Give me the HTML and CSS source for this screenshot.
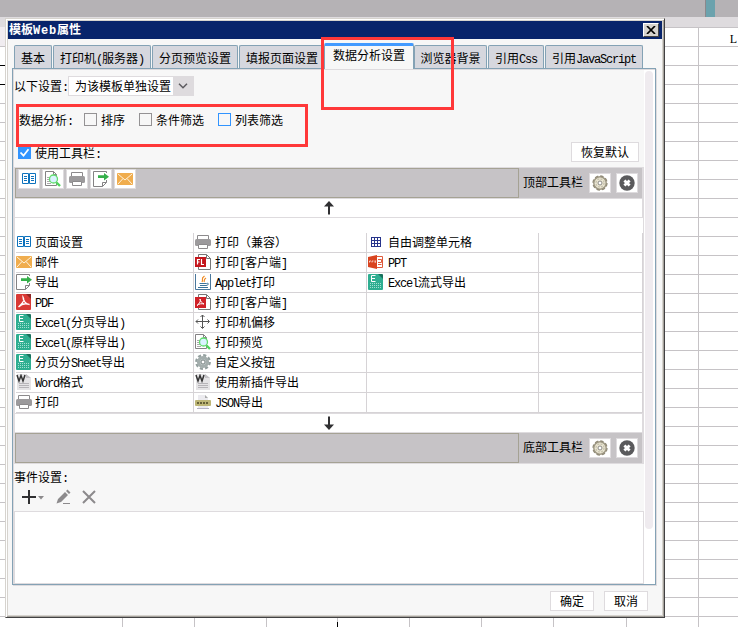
FILE: index.html
```html
<!DOCTYPE html>
<html lang="zh-CN">
<head>
<meta charset="utf-8">
<title>模板Web属性</title>
<link rel="stylesheet" href="styles.css">
</head>
<body>
<svg class="defs" aria-hidden="true">
  <symbol id="page" viewBox="0 0 16 16"><path d="M1.500 2.500h6v10h-6zM8.500 2.500h6v10h-6z" fill="#fff" stroke="#0d72bd"/><path d="M3 5.500h3M3 7.500h3M3 9.500h3M10 5.500h3M10 7.500h3M10 9.500h3" stroke="#0d72bd"/></symbol>
  <symbol id="mail" viewBox="0 0 16 16"><rect y="2" width="16" height="12" rx="1" fill="#f0ad4e"/><path d="M1 3l7 6 7-6M1 13l5-5.500M15 13l-5-5.500" fill="none" stroke="#fff3dd"/></symbol>
  <symbol id="export" viewBox="0 0 16 16"><path d="M13.500 2V.500H.500v15h9l4-4V9M9.500 15.500v-4h4" fill="#fff" stroke="#848284"/><path d="M5 4.200h6V2l5 3.700-5 3.700V7H5z" fill="#35b04a"/></symbol>
  <symbol id="pdf" viewBox="0 0 16 16"><path d="M1 0h10l4 4v11a1 1 0 0 1-1 1H1a1 1 0 0 1-1-1V1a1 1 0 0 1 1-1z" fill="#d93a36"/><path d="M10 0l5 5V0z" fill="#8f2725"/><path d="M7 3c2 3 .500 5-4.500 10 3-3 7-4 11-2.500C10 10 7 7 7 3z" fill="none" stroke="#fff" stroke-width="1.300"/></symbol>
  <symbol id="excel" viewBox="0 0 16 16"><path d="M1 0h10l4 4v11a1 1 0 0 1-1 1H1a1 1 0 0 1-1-1V1a1 1 0 0 1 1-1z" fill="#2fae91"/><path d="M10 0l5 5V1a1 1 0 0 0-1-1z" fill="#18715d"/><path d="M7.500 1.500H3.500v6h4M3.500 4.500h3.500" fill="none" stroke="#fff"/><path d="M2 9.500h11M2 11.500h11M2 13.500h11" stroke="#a3e0d2" stroke-dasharray="1 1"/></symbol>
  <symbol id="word" viewBox="0 0 16 16"><path d="M1 0h9l5 4v12H1z" fill="#e5e4e6"/><path d="M10 0v4h5z" fill="#c4c2c6"/><path d="M1 1l2 6 2-5.500L7 7l2-6" fill="none" stroke="#333" stroke-width="1.500"/><path d="M3 9.500h10M3 11.500h10M3 13.500h10" stroke="#b6b4b8"/></symbol>
  <symbol id="print" viewBox="0 0 16 16"><path d="M2.500 6V1.500h11V6" fill="#fff" stroke="#8c8a8c"/><rect y="5" width="16" height="7" rx="1.500" fill="#9c9a9c"/><path d="M3.500 10.500h9v4h-9z" fill="#fff" stroke="#8c8a8c"/></symbol>
  <symbol id="flash" viewBox="0 0 16 16"><path d="M3.500 15.500V.500h8l4 4v11zM11.500.500v4h4" fill="#fff" stroke="#777"/><rect y="3" width="11" height="10" fill="#c4161c"/><path d="M5 5.500H2.500v5M2.500 8h2M6.500 5v5.500h2.500" fill="none" stroke="#fff" stroke-width="1.200"/></symbol>
  <symbol id="pdfc" viewBox="0 0 16 16"><path d="M3.500 15.500V.500h8l4 4v11zM11.500.500v4h4" fill="#fff" stroke="#777"/><rect y="3" width="11" height="11" fill="#cf2027"/><path d="M5 5c1 2 0 4-3 6.500 2-2 5-2 7-1.500C7 9 5 7 5 5z" fill="none" stroke="#fff"/></symbol>
  <symbol id="java" viewBox="0 0 16 16"><path d="M.500 0v15.500h15V0" fill="#fff" stroke="#49779c"/><path d="M9.500 2C5 5 9 5 7 8M11 4c-3 2-1 2-2 4" fill="none" stroke="#ee8a25" stroke-width="1.200"/><path d="M4.500 9.500h7c3-1 2 2-.500 2M5 11.500h6M3 13.500h10" fill="none" stroke="#3b7299"/></symbol>
  <symbol id="move" viewBox="0 0 16 16"><path d="M7.500 1v13M1 7.500h13M5.500 3l2-2 2 2M5.500 12.500l2 2 2-2M3 5.500l-2 2 2 2M12.500 5.500l2 2-2 2" fill="none" stroke="#555"/></symbol>
  <symbol id="preview" viewBox="0 0 16 16"><path d="M.500 14.500V.500h8l3 3v11zM8.500.500v3h3" fill="#fff" stroke="#848284"/><path d="M2 6.500h3M2 8.500h3M2 10.500h3M2 12.500h4" stroke="#aaa"/><path d="M11.500 11.500L15 15" stroke="#4fd45c" stroke-width="2.400"/><circle cx="8.500" cy="8" r="4" fill="#d9f3ff" stroke="#61dc6d" stroke-width="1.300"/></symbol>
  <symbol id="gear" viewBox="0 0 16 16"><circle cx="8" cy="8" r="6.700" fill="none" stroke="#94a09f" stroke-width="2.400" stroke-dasharray="3.100 2.160"/><circle cx="8" cy="8" r="4.600" fill="#b9c3c2" stroke="#a3adac" stroke-width="3"/><circle cx="8" cy="8" r="2" fill="#fff" stroke="#7d8887"/></symbol>
  <symbol id="json" viewBox="0 0 16 16"><path d="M3 1h7l3 3v11H3z" fill="#ecebef"/><path d="M10 1v3h3z" fill="#aaa"/><rect y="6" width="16" height="6" rx="1" fill="#bdb676"/><path d="M2 9h12" stroke="#656038" stroke-width="2" stroke-dasharray="2 1"/><path d="M2 14.500h12" stroke="#b5b4c5"/></symbol>
  <symbol id="grid" viewBox="0 0 16 16"><path d="M3.500 3v10M6.500 3v10M9.500 3v10M12.500 3v10M3 3.500h10M3 6.500h10M3 9.500h10M3 12.500h10" stroke="#27348b"/></symbol>
  <symbol id="ppt" viewBox="0 0 16 16"><path d="M8.500 2.500h6v11h-6" fill="#fff" stroke="#df5b3c"/><path d="M10 5.500h3.500v3H10M10 10.500h3.500" fill="none" stroke="#df5b3c"/><path d="M0 3l9-2v14l-9-2z" fill="#d9441f"/><path d="M1.500 8.500V7H3M4 8.500V7h1.500M6.500 7H8M7.200 7v2" fill="none" stroke="#fff" stroke-width=".7"/></symbol>
  <symbol id="cog" viewBox="0 0 16 16"><circle cx="8" cy="8" r="6.200" fill="#ece8d4" stroke="#a19b87" stroke-width="1.500"/><circle cx="8" cy="8" r="7" fill="none" stroke="#918b78" stroke-width="1.300" stroke-dasharray="3.500 2"/><circle cx="8" cy="8" r="4" fill="none" stroke="#c9c4b0" stroke-width="1.500" stroke-dasharray="2 1.140"/><circle cx="8" cy="8" r="2" fill="#fff" stroke="#8b8a85"/></symbol>
  <symbol id="close" viewBox="0 0 16 16"><circle cx="8" cy="8" r="7.700" fill="#5a5a5c"/><path d="M5.400 5.400l5.200 5.200M10.600 5.400l-5.200 5.200" stroke="#fff" stroke-width="2.800"/></symbol>
</svg>

<div class="sheet">
  <div class="ribbon"><i class="marker"></i></div>
  <div class="strip"></div>
  <div class="cells"><span class="cell-text">L</span></div>
  <i class="dark-row first"></i><i class="dark-row second"></i><i class="gutter"></i><i class="dark-col"></i>
</div>

<div class="dialog">
  <div class="title"><span>模板<b class="en">Web</b>属性</span>
    <span class="x-btn"><svg width="10" height="8" viewBox="0 0 10 8"><path d="M1 0l8 8M9 0L1 8" stroke="#000" stroke-width="1.700"/></svg></span>
  </div>
  <div class="tabs">
    <div class="tab t1">基本</div><div class="tab t2">打印机<span class="en">(</span>服务器<span class="en">)</span></div><div class="tab t3">分页预览设置</div><div class="tab t4">填报页面设置</div><div class="tab active">数据分析设置</div><div class="tab t6">浏览器背景</div><div class="tab t7">引用<span class="en">Css</span></div><div class="tab t8">引用<span class="en">JavaScript</span></div>
  </div>
  <div class="panel">
    <div class="main">
      <div class="scope"><span>以下设置<span class="en">:</span></span>
        <div class="select"><span>为该模板单独设置</span><i><svg width="10" height="6" viewBox="0 0 10 6"><path d="M1 .800l4 4 4-4" fill="none" stroke="#5c5a5f" stroke-width="1.500"/></svg></i></div>
      </div>
      <div class="analysis"><span class="lead">数据分析<span class="en">:</span></span>
        <label class="c1"><i class="box"></i>排序</label><label class="c2"><i class="box"></i>条件筛选</label><label><i class="box focus"></i>列表筛选</label>
      </div>
      <div class="use"><label><i class="box on"><svg width="13" height="13" viewBox="0 0 13 13"><path d="M2.500 6.500l3 3.200 5-6.500" fill="none" stroke="#fff" stroke-width="1.800"/></svg></i><span>使用工具栏<span class="en">:</span></span></label><span class="btn reset">恢复默认</span></div>

      <div class="bar">
        <div class="slots"><span class="tool"><svg><use href="#page"/></svg></span><span class="tool"><svg><use href="#preview"/></svg></span><span class="tool"><svg><use href="#print"/></svg></span><span class="tool"><svg><use href="#export"/></svg></span><span class="tool"><svg><use href="#mail"/></svg></span></div>
        <span class="bar-name">顶部工具栏</span><span class="tool"><svg><use href="#cog"/></svg></span><span class="tool"><svg><use href="#close"/></svg></span>
      </div>
      <div class="arrow"><svg width="12" height="14" viewBox="0 0 12 14"><path d="M6 13.500V3" stroke="#303032" stroke-width="2"/><path d="M6 0l5 5.500H1z" fill="#303032"/></svg></div>
      <div class="grid">
        <div><svg><use href="#page"/></svg><p>页面设置</p></div><div><svg><use href="#print"/></svg><p>打印（兼容）</p></div><div><svg><use href="#grid"/></svg><p>自由调整单元格</p></div><div></div>
        <div><svg><use href="#mail"/></svg><p>邮件</p></div><div><svg><use href="#flash"/></svg><p>打印<span class="en">[</span>客户端<span class="en">]</span></p></div><div><svg><use href="#ppt"/></svg><p><span class="en">PPT</span></p></div><div></div>
        <div><svg><use href="#export"/></svg><p>导出</p></div><div><svg><use href="#java"/></svg><p><span class="en">Applet</span>打印</p></div><div><svg><use href="#excel"/></svg><p><span class="en">Excel</span>流式导出</p></div><div></div>
        <div><svg><use href="#pdf"/></svg><p><span class="en">PDF</span></p></div><div><svg><use href="#pdfc"/></svg><p>打印<span class="en">[</span>客户端<span class="en">]</span></p></div><div></div><div></div>
        <div><svg><use href="#excel"/></svg><p><span class="en">Excel(</span>分页导出<span class="en">)</span></p></div><div><svg><use href="#move"/></svg><p>打印机偏移</p></div><div></div><div></div>
        <div><svg><use href="#excel"/></svg><p><span class="en">Excel(</span>原样导出<span class="en">)</span></p></div><div><svg><use href="#preview"/></svg><p>打印预览</p></div><div></div><div></div>
        <div><svg><use href="#excel"/></svg><p>分页分<span class="en">Sheet</span>导出</p></div><div><svg><use href="#gear"/></svg><p>自定义按钮</p></div><div></div><div></div>
        <div><svg><use href="#word"/></svg><p><span class="en">Word</span>格式</p></div><div><svg><use href="#word"/></svg><p>使用新插件导出</p></div><div></div><div></div>
        <div><svg><use href="#print"/></svg><p>打印</p></div><div><svg><use href="#json"/></svg><p><span class="en">JSON</span>导出</p></div><div></div><div></div>
      </div>
      <div class="arrow down"><svg width="12" height="14" viewBox="0 0 12 14"><path d="M6 .500V11" stroke="#303032" stroke-width="2"/><path d="M6 14l5-5.500H1z" fill="#303032"/></svg></div>
      <div class="bar">
        <div class="slots"></div>
        <span class="bar-name">底部工具栏</span><span class="tool"><svg><use href="#cog"/></svg></span><span class="tool"><svg><use href="#close"/></svg></span>
      </div>
      <div class="event-name">事件设置<span class="en">:</span></div>
      <div class="event-tools">
        <svg width="24" height="16" viewBox="0 0 24 16"><path d="M0 8h14M7 1v14" stroke="#303032" stroke-width="2"/><path d="M16 7h6l-3 3.500z" fill="#8c8a8c"/></svg>
        <svg class="pencil" width="14" height="16" viewBox="0 0 14 16"><path d="M.500 14.500L2 10l7-7 3 3-7 7zM10 2l1.500-1.500 3 3L13 5z" fill="#8c8a8c"/><path d="M7 14.500h7" stroke="#8c8a8c"/></svg>
        <svg width="14" height="16" viewBox="0 0 14 16"><path d="M1 2l12 12M13 2L1 14" stroke="#8c8a8c" stroke-width="2"/></svg>
      </div>
      <div class="events"></div>
    </div>
    <div class="track"><div class="thumb"></div></div>
  </div>
  <div class="footer"><span class="btn">确定</span><span class="btn">取消</span></div>
</div>
<div class="mark mark-tab"></div>
<div class="mark mark-analysis"></div>
</body>
</html>
```
FILE: styles.css
```css
* { box-sizing: border-box; }
body {
  margin: 0;
  width: 738px;
  height: 627px;
  overflow: hidden;
  position: relative;
  background: #fff;
  color: #000;
  font: 12px/16px "Noto Sans CJK SC", sans-serif;
  white-space: nowrap;
}
.defs { position: absolute; width: 0; height: 0; }
i { font-style: normal; display: block; }
p { margin: 0; }
.en { font-family: "Liberation Mono", "Noto Sans CJK SC", monospace; letter-spacing: -1.2px; }

/* spreadsheet behind the window */
.sheet { height: 627px; position: relative; display: flex; flex-direction: column; }
.ribbon { height: 17px; background: #b5b2b5; display: flex; justify-content: flex-end; padding-right: 23px; }
.marker { width: 10px; background: #6ba2ad; border-left: 1px solid #8a888c; }
.strip { height: 10px; background: #dedbde; }
.cells {
  flex: 1;
  text-align: right;
  padding: 3px 1px 0 0;
  background:
    repeating-linear-gradient(to right, #c6c3c6 0 1px, transparent 1px 72px) 122px 0 / 200px 100% no-repeat,
    repeating-linear-gradient(to right, #c6c3c6 0 1px, transparent 1px 72px) 337px 0 / 250px 100% no-repeat,
    repeating-linear-gradient(to right, #c6c3c6 0 1px, transparent 1px 72px) 626px 0 / 112px 100% no-repeat,
    linear-gradient(#c6c3c6 0 1px, transparent 1px) 0 0 / 100% 19px;
}
.cell-text { font: 12px/16px "Liberation Serif", serif; }
.gutter { position: absolute; left: 0; top: 27px; width: 5px; height: 19px; background: #f0ecf0; }
.dark-row { position: absolute; left: 0; width: 5px; height: 1px; background: #000; }
.dark-row.first { top: 65px; }
.dark-row.second { top: 84px; }
.dark-col { position: absolute; left: 337px; top: 622px; width: 1px; height: 5px; background: #000; }

/* window */
.dialog {
  position: absolute;
  left: 5px;
  top: 18px;
  width: 660px;
  height: 600px;
  background: #f7f7f7;
  border: 1px solid #d6d3ce;
  border-right-color: #424142;
  border-bottom-color: #424142;
  box-shadow: inset 1px 1px #fff, inset -1px -1px #a5a29c, inset 2px 2px #d6d3ce, inset -2px -2px #d6d3ce;
  padding: 2px 2px 0;
}
.title {
  height: 18px;
  background: #08246b;
  color: #fff;
  font-weight: 700;
  display: flex;
  justify-content: space-between;
  align-items: center;
  padding: 0 3px 0 1px;
}
.title .en { letter-spacing: .8px; }
.x-btn {
  width: 16px;
  height: 14px;
  display: grid;
  place-items: center;
  background: #d6d3ce;
  border: 1px solid #fff;
  border-right-color: #424142;
  border-bottom-color: #424142;
}
.tabs { height: 29px; display: flex; align-items: flex-end; padding-left: 6px; gap: 1px; }
.tab {
  height: 23px;
  background: #d6d7de;
  border: 1px solid #84a2b5;
  border-bottom: 0;
  border-radius: 2px 2px 0 0;
  text-align: center;
  line-height: 23px;
}
.t1 { width: 38px; }
.t2 { width: 98px; }
.t3 { width: 86px; }
.t4 { width: 85px; margin-right: -1px; border-right: 0; }
.t6 { width: 73px; margin-left: -1px; }
.t7 { width: 56px; }
.t8 { width: 98px; }
.active {
  position: relative;
  width: 90px;
  height: 26px;
  margin-bottom: -1px;
  background: #f7f7f7;
  border-top: 3px solid #429aff;
  line-height: 18px;
}
.panel {
  width: 644px;
  height: 517px;
  margin-left: 4px;
  border: 1px solid #84a2b5;
  box-shadow: inset 1px 1px #dedbde, 1px 1px #dedbde;
  padding: 1px 0 0 1px;
  display: flex;
}
.main { width: 630px; display: flex; flex-direction: column; }
.scope { height: 33px; padding-top: 6px; display: flex; align-items: flex-start; }
.scope > span { width: 54px; line-height: 19px; }
.select {
  width: 126px;
  height: 20px;
  background: #fff;
  border: 1px solid #dedbde;
  display: flex;
  justify-content: space-between;
  line-height: 18px;
  padding-left: 6px;
}
.select i { width: 20px; background: #dedbde; display: grid; place-items: center; }
.analysis { height: 38px; padding: 10px 0 0 5px; display: flex; align-items: flex-start; line-height: 13px; }
.lead { width: 65px; }
label { display: flex; gap: 4px; }
.c1 { width: 55px; }
.c2 { width: 79px; }
.box { width: 13px; height: 13px; background: #f7f7f7; border: 1px solid #949294; }
.box.focus { border-color: #3194ff; }
.box.on { background: #3194ff; border: 0; }
.use { height: 26px; display: flex; justify-content: space-between; padding: 1px 5px 0 4px; line-height: 13px; }
.use label { padding-top: 4px; }
.btn {
  width: 44px;
  height: 20px;
  background: #fff;
  border: 1px solid #dedbde;
  text-align: center;
  line-height: 18px;
}
.reset { width: 68px; }
.bar {
  height: 32px;
  background: #c6c3c6;
  border: 1px solid #dedbde;
  border-right-width: 2px;
  display: flex;
  align-items: center;
}
.slots {
  width: 504px;
  height: 30px;
  border: 1px solid #a5a294;
  padding: 0 2px;
  display: flex;
  gap: 2px;
}
.tool {
  width: 22px;
  height: 20px;
  background: #fff;
  border: 1px solid #dedbde;
  display: grid;
  place-items: center;
}
.tool svg, .grid svg { width: 16px; height: 16px; display: block; }
.bar-name { width: 65px; padding: 0 0 2px 4px; }
.bar-name + .tool { margin: 0 5px; }
.arrow {
  height: 19px;
  background: #fff;
  border: solid #dedbde;
  border-width: 0 2px 1px 1px;
  display: flex;
  justify-content: center;
  align-items: center;
}
.arrow.down { border-top-width: 1px; border-bottom: 0; }
.grid {
  height: 195px;
  padding: 15px 0 0 1px;
  background: #fff;
  border-right: 1px solid #dedbde;
  border-left: 1px solid #dedbde;
  display: grid;
  grid-template-columns: 178px 173px 172px 104px;
  grid-template-rows: repeat(9, 20px);
}
.grid div {
  border: solid #d6d3d6;
  border-width: 0 1px 1px 0;
  padding-bottom: 1px;
  display: flex;
  align-items: center;
}
.grid p { line-height: 18px; height: 18px; }
.grid svg { margin-right: 3px; }
.grid div:nth-child(4n + 2) svg, .grid div:nth-child(4n + 3) svg { margin: 0 4px 0 1px; }
.event-name { height: 25px; line-height: 26px; }
.event-tools { height: 22px; padding: 0 0 0 8px; display: flex; }
.pencil { margin: 0 12px 0 10px; overflow: visible; }
.events { flex: 1; background: #fff; border: 1px solid #dedbde; }
.track { width: 11px; padding: 1px 0 0 1px; background: #fff; }
.thumb { width: 8px; height: 458px; background: #efebef; border-radius: 4px; }
.footer { display: flex; gap: 10px; justify-content: flex-end; padding: 6px 14px 0 0; }

/* callouts */
.mark { position: absolute; border: 3px solid #ff3839; }
.mark-tab { left: 321px; top: 37px; width: 133px; height: 73px; }
.mark-analysis { left: 16px; top: 104px; width: 292px; height: 43px; }
```
